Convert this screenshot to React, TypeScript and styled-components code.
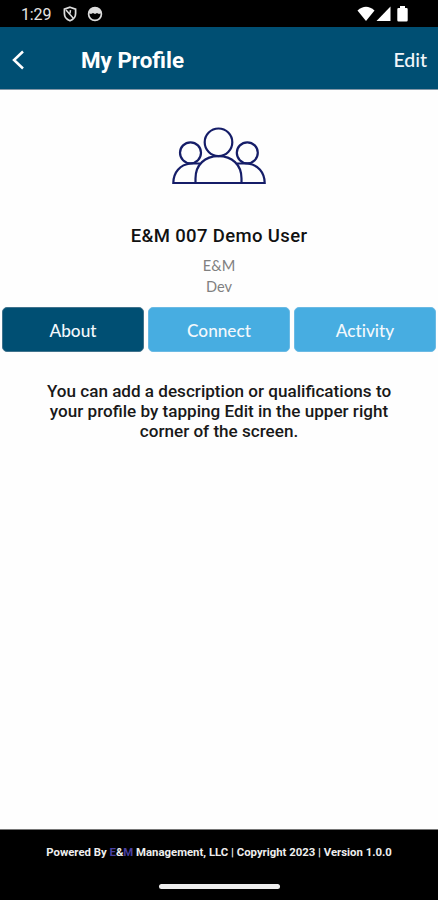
import React from "react";
import styled, { createGlobalStyle } from "styled-components";

const GlobalStyle = createGlobalStyle`
  * { box-sizing: border-box; }
  body { margin: 0; background: #fefefe; font-family: Roboto, sans-serif; }
`;

const Screen = styled.div`
  width: 438px;
  height: 900px;
  display: flex;
  flex-direction: column;
  background: #fefefe;
  overflow: hidden;
`;

const StatusBar = styled.div`
  height: 27px;
  flex: none;
  display: flex;
  align-items: center;
  padding: 1px 30px 0 21px;
  background: #000;
  color: #e4e4e4;
`;

const Clock = styled.span`
  width: 42px;
  padding-top: 1px;
  font-size: 16px;
  line-height: 20px;
  letter-spacing: -0.15px;
`;

const StatusGroup = styled.div<{ $gap: number; $end?: boolean }>`
  display: flex;
  align-items: center;
  gap: ${(p) => p.$gap}px;
  margin-left: ${(p) => (p.$end ? "auto" : "0")};
`;

const Header = styled.header`
  height: 63px;
  flex: none;
  display: flex;
  align-items: center;
  padding: 3px 11px 0 12px;
  background: #004f73;
  border-bottom: 1px solid #8498a8;
  color: #fff;
`;

const BackButton = styled.button`
  display: flex;
  width: 69px;
  padding: 0;
  border: 0;
  background: none;
  color: inherit;
`;

const Title = styled.h1`
  margin: 0;
  flex: 1;
  font-size: 22.4px;
  font-weight: 700;
  line-height: 28px;
`;

const EditButton = styled.button`
  padding: 0;
  border: 0;
  background: none;
  color: #f2f6fa;
  font: 500 19.5px/26px Lato, sans-serif;
`;

const Profile = styled.section`
  flex: none;
  display: flex;
  flex-direction: column;
  align-items: center;
  padding-top: 37px;
  height: 217px;
`;

const Name = styled.h2`
  margin: 38px 0 0;
  font-size: 18.5px;
  font-weight: 500;
  line-height: 26px;
  letter-spacing: 0.36px;
  color: #111;
`;

const Detail = styled.p<{ $first?: boolean }>`
  margin: ${(p) => (p.$first ? "6px" : "0")} 0 0;
  font: 400 14.6px/21px Lato, sans-serif;
  color: #808080;
`;

const Tabs = styled.nav`
  flex: none;
  display: grid;
  grid-template-columns: repeat(3, 1fr);
  gap: 4px;
  padding: 0 2px;
`;

const Tab = styled.button<{ $active?: boolean }>`
  height: 45px;
  padding: 3px 0 0;
  border: 1px solid ${(p) => (p.$active ? "#40738d" : "#6bbae4")};
  border-radius: 5px;
  background: ${(p) => (p.$active ? "#004f73" : "#47ade1")};
  color: #f3f8fc;
  font: 500 17.2px/24px Lato, sans-serif;
  font-variant-ligatures: none;
`;

const Description = styled.p`
  margin: 29px 0 0;
  flex: 1;
  text-align: center;
  font-size: 17.1px;
  font-weight: 500;
  line-height: 20px;
  color: #191919;
`;

const Footer = styled.footer`
  height: 71px;
  flex: none;
  display: flex;
  flex-direction: column;
  align-items: center;
  padding-top: 14px;
  border-top: 1px solid #777;
  background: #000;
  color: #eee;
  font-size: 11.35px;
  font-weight: 700;
  line-height: 16px;
`;

const Brand = styled.span`
  color: #4a40a0;
`;

const HomeIndicator = styled.div`
  width: 121px;
  height: 5px;
  margin-top: 24px;
  border-radius: 3px;
  background: #eee;
`;

const ShieldIcon = () => (
  <svg width="14" height="16" viewBox="0 0 14 16" fill="none" stroke="#ddd" strokeWidth="1.7">
    <path d="M7 1.200 12.600 3.200v4.300c0 3.500-2.200 6-5.600 7.300C3.600 13.500 1.400 11 1.400 7.500V3.200Z" />
    <path d="M3 4 10.500 12.500M7.500 4.200 7 7.500" strokeWidth="1.500" />
  </svg>
);

const FaceIcon = () => (
  <svg width="16" height="16" viewBox="0 0 16 16">
    <circle cx="8" cy="8" r="6.400" fill="none" stroke="#ddd" strokeWidth="1.700" />
    <path d="M1.500 7C2 3 5 1.500 8 1.500S14 3 14.500 7L12 8l-2-1-2 1-2-1-2 1Z" fill="#ddd" />
  </svg>
);

const WifiIcon = () => (
  <svg width="18" height="16" viewBox="0 0 18 16">
    <path d="M.5 4.500Q9-3 17.500 4.500L9 15Z" fill="#fff" />
  </svg>
);

const SignalIcon = () => (
  <svg width="15" height="16" viewBox="0 0 15 16">
    <path d="M14.500.5v14.500H.5Z" fill="#fff" />
  </svg>
);

const BatteryIcon = () => (
  <svg width="11" height="16" viewBox="0 0 11 16">
    <path d="M3 0h5v2h1.500q1.200 0 1.200 1.200v11q0 1.300-1.200 1.300h-8Q.3 15.500.3 14.200v-11Q.3 2 1.500 2H3Z" fill="#fff" />
  </svg>
);

const BackIcon = () => (
  <svg width="13" height="20" viewBox="0 0 13 20" fill="none" stroke="currentColor" strokeWidth="2.500">
    <path d="M11 1.500 2 10l9 8.500" />
  </svg>
);

const PeopleIcon = () => (
  <svg width="94" height="58" viewBox="0 0 94 58" fill="none" stroke="#151d68" strokeWidth="2.200">
    <circle cx="46.500" cy="15.300" r="13.800" />
    <circle cx="18.500" cy="25.800" r="10.500" />
    <circle cx="75.300" cy="25.800" r="10.500" />
    <path d="M23.500 56V51.500C23.500 37.500 33 29.200 46.500 29.200S69.500 37.500 69.500 51.500V56Z" />
    <path d="M28 36.500H18.500C8 37.500 1.300 45.500 1.300 56h22.200M65 36.500h10.500C86 37.500 92.700 45.500 92.700 56H69.500" />
  </svg>
);

export default function App() {
  return (
    <>
      <GlobalStyle />
      <Screen>
        <StatusBar>
          <Clock>1:29</Clock>
          <StatusGroup $gap={10}>
            <ShieldIcon />
            <FaceIcon />
          </StatusGroup>
          <StatusGroup $gap={1} $end>
            <WifiIcon />
            <StatusGroup $gap={6}>
              <SignalIcon />
              <BatteryIcon />
            </StatusGroup>
          </StatusGroup>
        </StatusBar>
        <Header>
          <BackButton aria-label="Back">
            <BackIcon />
          </BackButton>
          <Title>My Profile</Title>
          <EditButton>Edit</EditButton>
        </Header>
        <Profile>
          <PeopleIcon />
          <Name>E&amp;M 007 Demo User</Name>
          <Detail $first>E&amp;M</Detail>
          <Detail>Dev</Detail>
        </Profile>
        <Tabs>
          <Tab $active>About</Tab>
          <Tab>Connect</Tab>
          <Tab>Activity</Tab>
        </Tabs>
        <Description>
          You can add a description or qualifications to
          <br />
          your profile by tapping Edit in the upper right
          <br />
          corner of the screen.
        </Description>
        <Footer>
          <div>
            Powered By <Brand>E</Brand>&amp;<Brand>M</Brand> Management, LLC | Copyright 2023 | Version 1.0.0
          </div>
          <HomeIndicator />
        </Footer>
      </Screen>
    </>
  );
}
